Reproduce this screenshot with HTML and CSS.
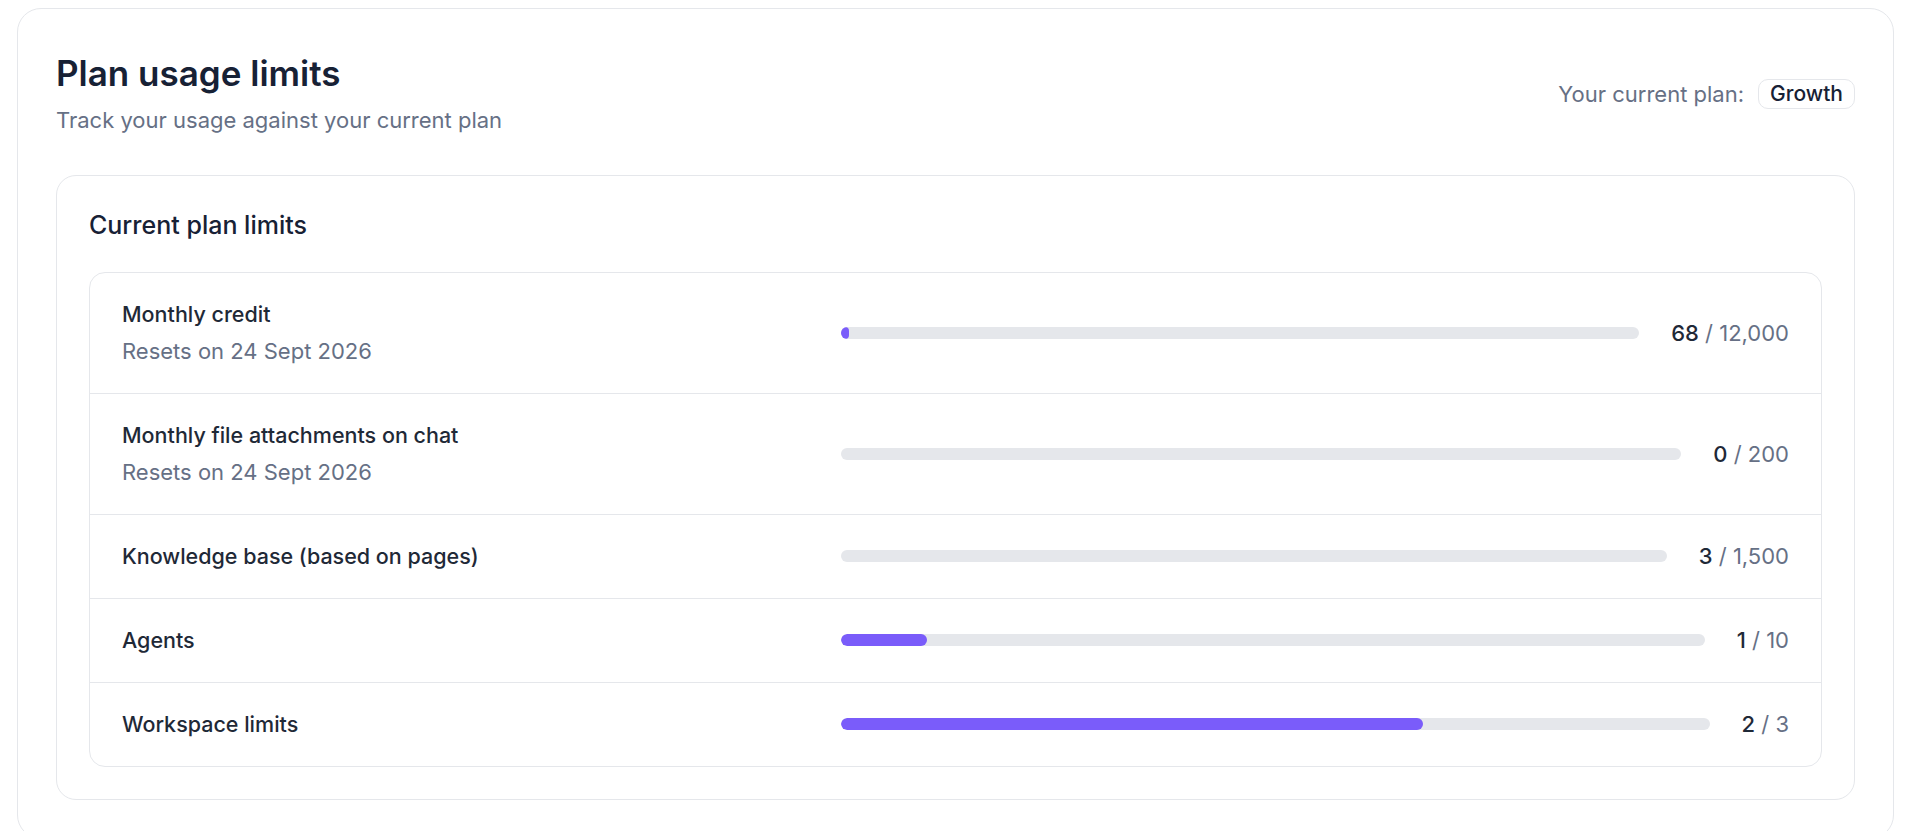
FILE: index.html
```html
<!DOCTYPE html>
<html lang="en">
<head>
    <meta charset="UTF-8">
    <meta name="viewport" content="width=device-width, initial-scale=1.0">
    <title>Plan usage limits</title>
    <link rel="stylesheet" href="styles.css">
</head>
<body>
    <main class="usage-card">
        <div class="usage-header">
            <div>
                <h1 class="usage-title">Plan usage limits</h1>
                <p class="usage-subtitle">Track your usage against your current plan</p>
            </div>
            <div class="current-plan">
                <span>Your current plan:</span>
                <span class="plan-badge">Growth</span>
            </div>
        </div>

        <section class="limits-card">
            <h2 class="limits-title">Current plan limits</h2>
            <div class="limits-table">
                <div class="limit-row">
                    <div class="limit-label">
                        <div class="limit-name">Monthly credit</div>
                        <div class="limit-reset">Resets on 24 Sept 2026</div>
                    </div>
                    <div class="limit-bar"><div class="limit-fill" style="width: 1%"></div></div>
                    <div class="limit-value"><b>68</b> / 12,000</div>
                </div>
                <div class="limit-row">
                    <div class="limit-label">
                        <div class="limit-name">Monthly file attachments on chat</div>
                        <div class="limit-reset">Resets on 24 Sept 2026</div>
                    </div>
                    <div class="limit-bar"><div class="limit-fill" style="width: 0%"></div></div>
                    <div class="limit-value"><b>0</b> / 200</div>
                </div>
                <div class="limit-row">
                    <div class="limit-label">
                        <div class="limit-name">Knowledge base (based on pages)</div>
                    </div>
                    <div class="limit-bar"><div class="limit-fill" style="width: 0%"></div></div>
                    <div class="limit-value"><b>3</b> / 1,500</div>
                </div>
                <div class="limit-row">
                    <div class="limit-label">
                        <div class="limit-name">Agents</div>
                    </div>
                    <div class="limit-bar"><div class="limit-fill" style="width: 10%"></div></div>
                    <div class="limit-value"><b>1</b> / 10</div>
                </div>
                <div class="limit-row">
                    <div class="limit-label">
                        <div class="limit-name">Workspace limits</div>
                    </div>
                    <div class="limit-bar"><div class="limit-fill" style="width: 67%"></div></div>
                    <div class="limit-value"><b>2</b> / 3</div>
                </div>
            </div>
        </section>
    </main>
</body>
</html>
```
FILE: styles.css
```css
* {
    box-sizing: border-box;
}

body {
    margin: 0;
    background: #fff;
    font-family: Inter, "Noto Sans", sans-serif;
    color: #1f2937;
}

.usage-card {
    margin: 8px 26px 0 17px;
    padding: 42px 38px 38px;
    border: 1px solid #e5e7eb;
    border-radius: 24px;
    background: #fff;
}

.usage-header {
    display: flex;
    align-items: center;
    justify-content: space-between;
}

.usage-title {
    margin: 0;
    font-size: 35px;
    line-height: 44px;
    font-weight: 600;
    color: #172135;
}

.usage-subtitle {
    margin: 9px 0 0;
    font-size: 22px;
    line-height: 32px;
    color: #667085;
}

.current-plan {
    display: flex;
    align-items: center;
    gap: 14px;
    font-size: 22px;
    color: #667085;
}

.plan-badge {
    padding: 0 11px;
    font-size: 21px;
    line-height: 28px;
    border: 1px solid #e5e7eb;
    border-radius: 10px;
    font-weight: 500;
    color: #172135;
}

.limits-card {
    margin-top: 39px;
    padding: 33px 32px 32px;
    border: 1px solid #e5e7eb;
    border-radius: 20px;
}

.limits-title {
    margin: 0 0 31px;
    font-size: 25px;
    line-height: 32px;
    font-weight: 500;
    color: #172135;
}

.limits-table {
    border: 1px solid #e5e7eb;
    border-radius: 16px;
}

.limit-row {
    display: flex;
    align-items: center;
    gap: 32px;
    padding: 27px 32px 28px;
    border-top: 1px solid #e5e7eb;
}

.limit-row:first-child {
    border-top: none;
}

.limit-label {
    width: 687px;
    flex-shrink: 0;
    display: flex;
    flex-direction: column;
    gap: 9px;
    line-height: 28px;
}

.limit-name {
    font-size: 21.5px;
    font-weight: 500;
    color: #1f2937;
}

.limit-reset {
    font-size: 22px;
    color: #667085;
}

.limit-bar {
    flex: 1;
    height: 12px;
    border-radius: 999px;
    background: #e5e7eb;
    overflow: hidden;
}

.limit-fill {
    height: 100%;
    border-radius: 999px;
    background: #7a5cfa;
}

.limit-value {
    font-size: 22px;
    line-height: 28px;
    color: #667085;
    white-space: nowrap;
}

.limit-value b {
    font-weight: 500;
    color: #1f2937;
}
```
